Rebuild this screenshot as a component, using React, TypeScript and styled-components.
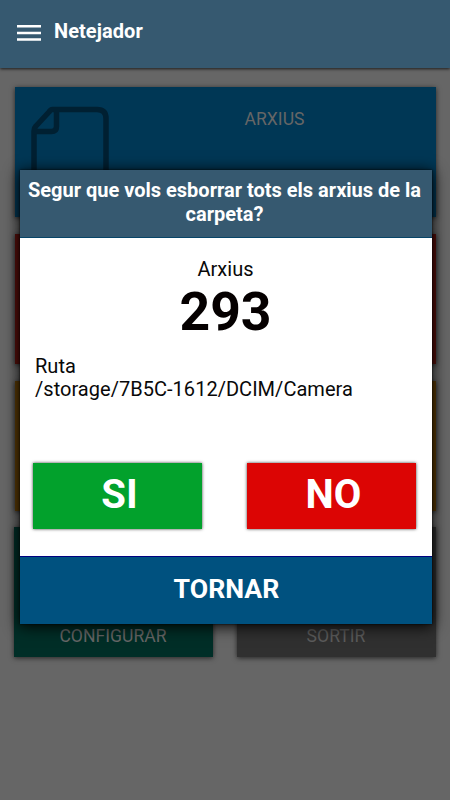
import React from "react";
import styled, { createGlobalStyle } from "styled-components";

const GlobalStyle = createGlobalStyle`
  * { box-sizing: border-box; }
  body { margin: 0; font-family: Roboto, "Liberation Sans", sans-serif; }
`;

const Screen = styled.div`
  position: relative;
  width: 450px;
  height: 800px;
  overflow: hidden;
  background: #666666;
`;

const AppBar = styled.header`
  display: flex;
  align-items: flex-start;
  height: 68px;
  padding-left: 17px;
  background: #365970;
  box-shadow: 0 1px 3px rgba(0, 0, 0, 0.75);
`;

const MenuIcon = styled.svg`
  width: 24px;
  height: 17px;
  margin-top: 24px;
`;

const AppTitle = styled.h1`
  margin: 19px 0 0 13px;
  font-size: 20px;
  line-height: 24px;
  font-weight: 700;
  letter-spacing: 0.06px;
  color: #ffffff;
`;

const Menu = styled.main`
  display: grid;
  grid-template-columns: 199px 199px;
  grid-auto-rows: 130px;
  column-gap: 24px;
  row-gap: 16.8px;
  padding: 19px 14px 0;
`;

const Tile = styled.div<{ $color: string; $wide?: boolean }>`
  display: flex;
  ${(p) => (p.$wide ? "grid-column: 1 / -1; margin-left: 1px;" : "")}
  background: ${(p) => p.$color};
  box-shadow: 0 1px 5px rgba(0, 0, 0, 0.65);
`;

const FileIcon = styled.svg`
  flex: none;
  width: 80px;
  height: 104px;
  margin: 19px 0 0 15px;
`;

const TileLabel = styled.span<{ $color?: string; $bottom?: boolean }>`
  flex: 1;
  align-self: ${(p) => (p.$bottom ? "flex-end" : "flex-start")};
  padding: ${(p) => (p.$bottom ? "0 1px 11px 0" : "22px 0 0 3px")};
  text-align: center;
  font-size: 17.6px;
  line-height: 20px;
  color: ${(p) => p.$color ?? "#666666"};
`;

const Dialog = styled.section`
  position: absolute;
  left: 20px;
  top: 170px;
  display: flex;
  flex-direction: column;
  width: 412px;
  height: 454px;
  background: #ffffff;
  box-shadow: 0 0 2px rgba(0, 0, 0, 0.9), 0 2px 14px 1px rgba(0, 0, 0, 0.9);
`;

const DialogTitle = styled.h2`
  height: 68px;
  margin: 0;
  padding: 9px 3px 0 0;
  background: #365970;
  border-bottom: 1px solid #074568;
  text-align: center;
  font-size: 20px;
  line-height: 23.5px;
  font-weight: 700;
  color: #ffffff;
`;

const DialogBody = styled.div`
  display: flex;
  flex-direction: column;
  flex: 1;
  padding: 19px 16px 27px 13px;
`;

const CountLabel = styled.div`
  padding-left: 2px;
  text-align: center;
  font-size: 20px;
  line-height: 24px;
  color: #090909;
`;

const Count = styled.div`
  padding-left: 2px;
  text-align: center;
  font-size: 53.5px;
  line-height: 62px;
  font-weight: 700;
  color: #050000;
`;

const Path = styled.div`
  padding: 12px 0 0 2px;
  font-size: 20px;
  line-height: 23px;
  letter-spacing: 0.03px;
  color: #090909;
`;

const Actions = styled.div`
  display: flex;
  justify-content: space-between;
  margin-top: auto;
`;

const ChoiceButton = styled.button<{ $color: string }>`
  width: 169px;
  height: 66px;
  padding: 0 0 4px 4px;
  border: 0;
  background: ${(p) => p.$color};
  box-shadow: 0 0 3px rgba(0, 0, 0, 0.75);
  font: 700 40px Roboto, sans-serif;
  color: #ffffff;
`;

const BackButton = styled.button`
  height: 68px;
  padding: 0 0 4px 1px;
  border: 0;
  border-top: 1px solid #000080;
  background: #00517f;
  font: 700 26.7px Roboto, sans-serif;
  color: #ffffff;
`;

export default function App() {
  return (
    <>
      <GlobalStyle />
      <Screen>
        <AppBar>
          <MenuIcon viewBox="0 0 24 17" fill="#ffffff">
            <path d="M0 1h24v2.500H0zM0 7.700h24v2.500H0zM0 14.200h24v2.500H0z" />
          </MenuIcon>
          <AppTitle>Netejador</AppTitle>
        </AppBar>
        <Menu>
          <Tile $color="#003755" $wide>
            <FileIcon viewBox="0 0 80 104" fill="none" stroke="#002032" strokeWidth="5.5" strokeLinejoin="round">
              <path d="M22.5 3.5H67q9 0 9 9V91q0 9-9 9H13q-9 0-9-9V25q0-3 2-5L19 6q1.500-2.500 3.500-2.500Z" />
              <path d="M26.500 4V20.500q0 5-5 5H4" />
            </FileIcon>
            <TileLabel>ARXIUS</TileLabel>
          </Tile>
          <Tile $color="#570f0b" $wide />
          <Tile $color="#5b3a05" $wide />
          <Tile $color="#002e27">
            <TileLabel $bottom>CONFIGURAR</TileLabel>
          </Tile>
          <Tile $color="#303030">
            <TileLabel $bottom $color="#5c5c5c">SORTIR</TileLabel>
          </Tile>
        </Menu>
        <Dialog role="dialog">
          <DialogTitle>
            Segur que vols esborrar tots els arxius de la
            <br />
            carpeta?
          </DialogTitle>
          <DialogBody>
            <CountLabel>Arxius</CountLabel>
            <Count>293</Count>
            <Path>
              Ruta
              <br />
              /storage/7B5C-1612/DCIM/Camera
            </Path>
            <Actions>
              <ChoiceButton $color="#02a12c">SI</ChoiceButton>
              <ChoiceButton $color="#dc0504">NO</ChoiceButton>
            </Actions>
          </DialogBody>
          <BackButton>TORNAR</BackButton>
        </Dialog>
      </Screen>
    </>
  );
}
